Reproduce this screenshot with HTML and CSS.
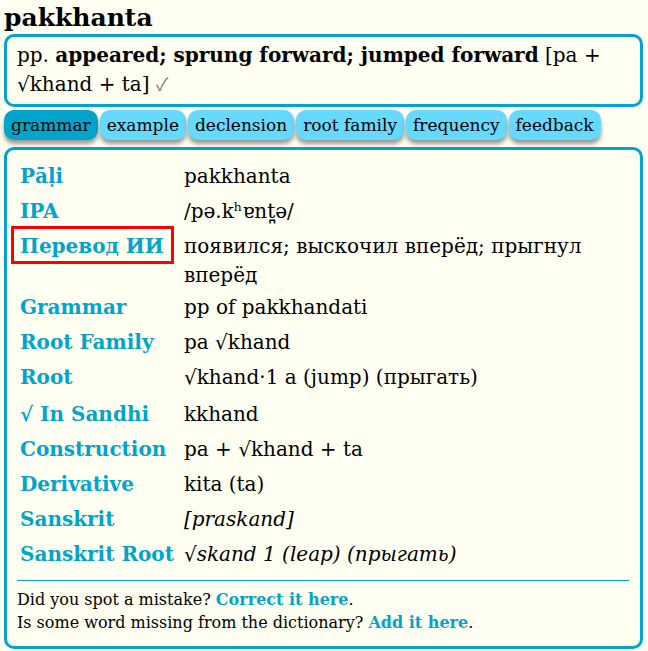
FILE: index.html
```html
<!DOCTYPE html>
<html lang="en">
<head>
<meta charset="utf-8">
<title>pakkhanta</title>
<link rel="stylesheet" href="styles.css">
</head>
<body>
<h1 class="headword">pakkhanta</h1>
<section class="box summary">pp. <b>appeared; sprung forward; jumped forward</b> [pa + √khand + ta] <span class="mark">✓</span></section>
<nav class="tabs">
<button class="tab active" type="button">grammar</button>
<button class="tab" type="button">example</button>
<button class="tab" type="button">declension</button>
<button class="tab" type="button">root family</button>
<button class="tab" type="button">frequency</button>
<button class="tab" type="button">feedback</button>
</nav>
<section class="box details">
<table class="grammar">
<tr><th scope="row">Pāḷi</th><td>pakkhanta</td></tr>
<tr><th scope="row">IPA</th><td>/pə.kʰɐnt̪ə/</td></tr>
<tr><th scope="row"><span class="marked">Перевод ИИ</span></th><td>появился; выскочил вперёд; прыгнул вперёд</td></tr>
<tr><th scope="row">Grammar</th><td>pp of pakkhandati</td></tr>
<tr><th scope="row">Root Family</th><td>pa √khand</td></tr>
<tr class="root"><th scope="row">Root</th><td>√khand·1 a (jump) (прыгать)</td></tr>
<tr><th scope="row">√ In Sandhi</th><td>kkhand</td></tr>
<tr><th scope="row">Construction</th><td>pa + √khand + ta</td></tr>
<tr><th scope="row">Derivative</th><td>kita (ta)</td></tr>
<tr><th scope="row">Sanskrit</th><td><i>[praskand]</i></td></tr>
<tr><th scope="row">Sanskrit Root</th><td><i>√skand 1 (leap) (прыгать)</i></td></tr>
</table>
<footer class="notes">
<p>Did you spot a mistake? <a href="#correct">Correct it here</a>.</p>
<p>Is some word missing from the dictionary? <a href="#add">Add it here</a>.</p>
</footer>
</section>
</body>
</html>
```
FILE: styles.css
```css
* { box-sizing: border-box; }
body {
  margin: 0;
  padding: 3px 5px 2px 4px;
  background: #fffff2;
  color: #000;
  font: 20px/29px "DejaVu Serif", serif;
}
.headword { margin: 0 0 2px; font-size: 25px; line-height: 29px; }
.box { border: 3px solid #00a4cc; border-radius: 10px; }
.summary { padding: 4px 10px 5px; }
.mark { color: gray; font-family: "Noto Sans CJK JP", sans-serif; font-size: 18px; line-height: 20px; }
.tabs { display: flex; gap: 2px; margin: 3px 0 7px; }
.tab {
  height: 30px;
  padding: 0 7px;
  border: 0;
  border-radius: 10px;
  background: #66d9ff;
  color: #000;
  font: 17px/30px "DejaVu Serif", serif;
  box-shadow: 0 4px 4px rgba(0, 0, 0, 0.4);
}
.tab.active { background: #00a4cc; }
.details { padding: 9px 11px 12px 10px; }
.grammar { border-collapse: collapse; }
.grammar th, .grammar td { height: 35px; padding: 3px 3px 0; vertical-align: top; text-align: left; }
.grammar th { padding-right: 7px; color: #00a4cc; white-space: nowrap; }
.grammar .root td { height: 37px; }
.marked { position: relative; }
.marked::after {
  content: "";
  position: absolute;
  inset: -8px -10px -6px -9px;
  border: 3px solid #f00;
}
.notes { margin-top: 8px; padding-top: 7px; border-top: 1px solid #00a4cc; font-size: 16px; line-height: 23px; }
.notes p { margin: 0; }
.notes a { color: #00a4cc; font-weight: bold; text-decoration: none; }
```
